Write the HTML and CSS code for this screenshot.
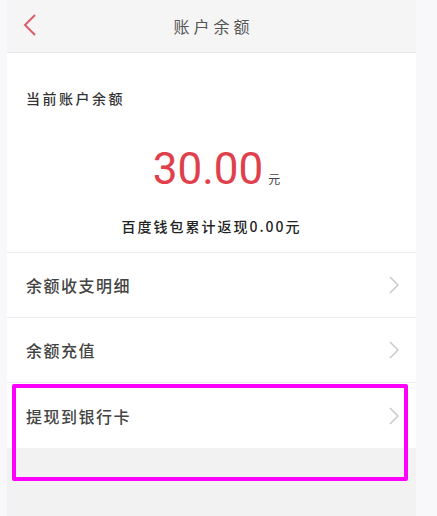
FILE: index.html
```html
<!DOCTYPE html>
<html lang="zh-CN">
<head>
<meta charset="utf-8">
<title>账户余额</title>
<link rel="stylesheet" href="styles.css">
</head>
<body>
<div class="phone">
  <header class="nav">
    <span class="back">
      <svg width="14" height="24" viewBox="0 0 14 24"><path d="M12 2 L2 12 L12 22" fill="none" stroke="#d9606a" stroke-width="2"/></svg>
    </span>
    <h1 class="title">账户余额</h1>
  </header>
  <section class="balance">
    <div class="label">当前账户余额</div>
    <div class="amount"><span class="num">30.00</span><span class="unit">元</span></div>
    <div class="sub">百度钱包累计返现0.00元</div>
  </section>
  <ul class="list">
    <li class="row"><span>余额收支明细</span><svg class="chev" width="10" height="18" viewBox="0 0 10 18"><path d="M1 1 L9 9 L1 17" fill="none" stroke="#c9c9c9" stroke-width="1.5"/></svg></li>
    <li class="row"><span>余额充值</span><svg class="chev" width="10" height="18" viewBox="0 0 10 18"><path d="M1 1 L9 9 L1 17" fill="none" stroke="#c9c9c9" stroke-width="1.5"/></svg></li>
    <li class="row last"><span>提现到银行卡</span><svg class="chev" width="10" height="18" viewBox="0 0 10 18"><path d="M1 1 L9 9 L1 17" fill="none" stroke="#c9c9c9" stroke-width="1.5"/></svg></li>
  </ul>
  <div class="rest"></div>
</div>
<div class="highlight"></div>
</body>
</html>
```
FILE: styles.css
```css
html, body {
  margin: 0;
  padding: 0;
  height: 100%;
}
body {
  background: #f8f8fb;
  font-family: "Noto Sans CJK SC", "Noto Sans", sans-serif;
  position: relative;
  overflow: hidden;
}
.phone {
  margin-left: 7px;
  width: 409px;
  height: 516px;
  display: flex;
  flex-direction: column;
  background: #f2f2f2;
}
.nav {
  height: 52px;
  background: #f5f5f5;
  border-bottom: 1px solid #e8e8e8;
  display: flex;
  align-items: center;
  justify-content: center;
  position: relative;
  flex: none;
}
.back {
  position: absolute;
  left: 16px;
  top: 13px;
  display: flex;
}
.title {
  margin: 0 0 0 4px;
  font-size: 16px;
  font-weight: 400;
  color: #555;
  letter-spacing: 4px;
}
.balance {
  background: #fff;
  height: 199px;
  padding-top: 35px;
  box-sizing: border-box;
  flex: none;
}
.label {
  margin-left: 19px;
  font-size: 14px;
  font-weight: 500;
  line-height: 20px;
  color: #333;
  letter-spacing: 2.5px;
}
.amount {
  margin-top: 37px;
  display: flex;
  justify-content: center;
  align-items: baseline;
  line-height: 48px;
  padding-left: 10px;
}
.num {
  font-family: Roboto, "Noto Sans", sans-serif;
  font-weight: 400;
  font-size: 44px;
  color: #e0404c;
}
.unit {
  font-size: 12px;
  color: #444;
  margin-left: 5px;
}
.sub {
  margin-top: 13px;
  text-align: center;
  font-size: 14px;
  font-weight: 500;
  line-height: 20px;
  color: #222;
  letter-spacing: 2px;
}
.list {
  list-style: none;
  margin: 0;
  padding: 0;
  background: #fff;
  flex: none;
}
.row {
  height: 64px;
  border-top: 1px solid #ececec;
  display: flex;
  align-items: center;
  justify-content: space-between;
  padding: 0 17px 0 19px;
  font-size: 16px;
  font-weight: 500;
  color: #444;
  letter-spacing: 1.5px;
}
.row.last {
  height: 65px;
}
.chev {
  display: block;
}
.rest {
  flex: 1;
  background: #f2f2f2;
}
.highlight {
  position: absolute;
  left: 12px;
  top: 384px;
  width: 396px;
  height: 97px;
  box-sizing: border-box;
  border: 4px solid #ff00ff;
  border-radius: 2px;
}
```
